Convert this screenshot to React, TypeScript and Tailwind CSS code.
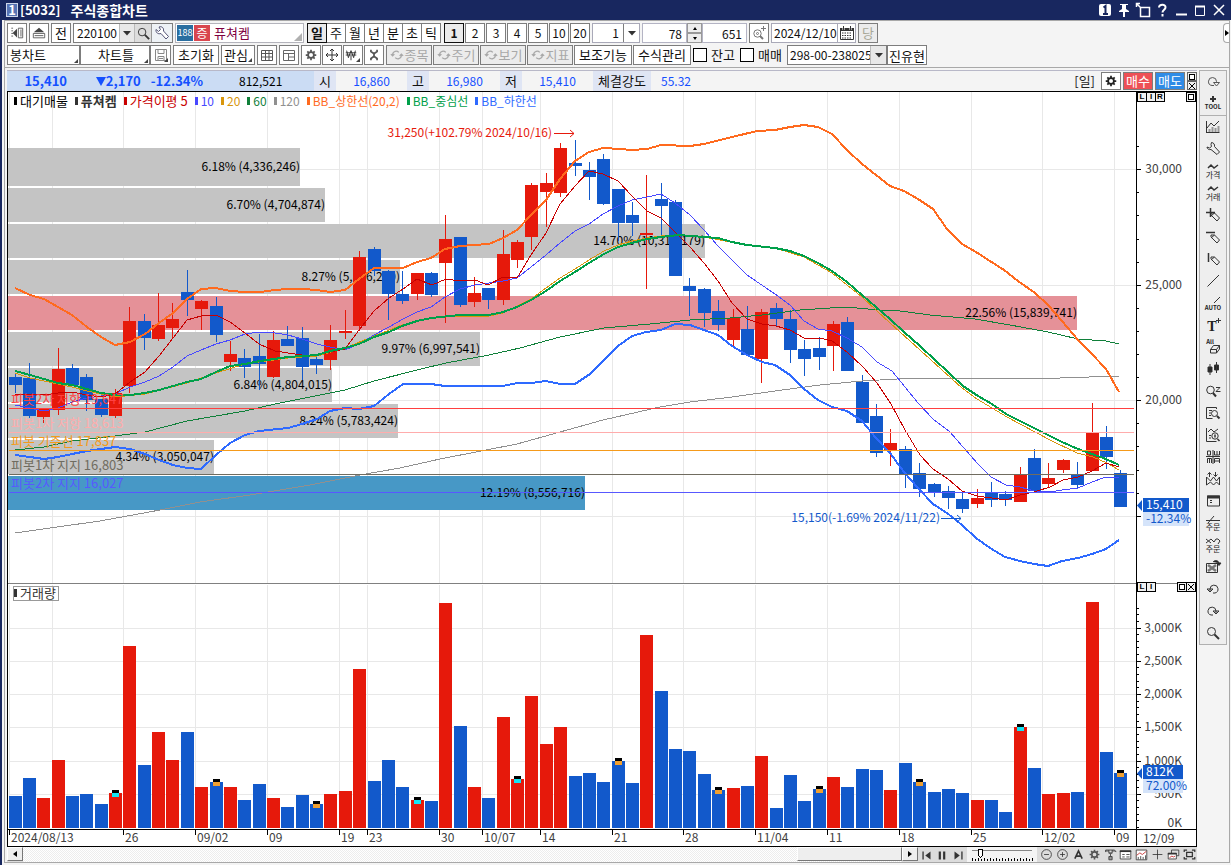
import type { ReactNode } from "react";

const RED = "#e6190b";
const BLUE = "#1259cb";

/* [rising, body top, body bottom, wick top, wick bottom, volume top] */
type Bar = [0 | 1, number, number, number, number, number];
const bars: Bar[] = [
  [0, 377, 385, 374, 393, 796], [0, 378, 416, 363, 418, 778], [1, 408, 417, 408, 423, 798], [1, 369, 410, 348, 415, 760],
  [0, 368, 385, 364, 385, 796], [0, 377, 400, 374, 411, 794], [0, 399, 415, 399, 417, 804], [1, 393, 416, 389, 418, 793],
  [1, 321, 386, 307, 393, 646], [0, 321, 338, 314, 350, 765], [1, 325, 339, 293, 341, 732], [1, 319, 328, 303, 339, 760],
  [0, 292, 300, 270, 316, 732], [1, 301, 309, 300, 330, 787], [0, 306, 335, 297, 342, 782], [1, 354, 362, 341, 371, 787],
  [0, 358, 367, 349, 378, 800], [0, 356, 364, 334, 390, 784], [1, 340, 377, 331, 378, 798], [0, 339, 346, 326, 346, 807],
  [0, 338, 367, 327, 380, 795], [0, 359, 365, 355, 374, 804], [1, 340, 360, 325, 370, 794], [1, 331, 333, 310, 339, 791],
  [1, 257, 326, 251, 331, 669], [0, 249, 271, 247, 276, 781], [0, 271, 294, 270, 320, 760], [0, 294, 301, 271, 304, 787],
  [1, 273, 294, 273, 300, 800], [0, 273, 295, 272, 297, 801], [1, 239, 263, 215, 323, 603], [0, 237, 305, 237, 307, 726],
  [1, 293, 302, 277, 307, 787], [0, 288, 300, 288, 309, 798], [1, 254, 300, 230, 305, 717], [1, 242, 260, 240, 268, 779],
  [1, 185, 237, 183, 250, 696], [1, 183, 192, 173, 227, 744], [1, 148, 193, 143, 197, 727], [0, 163, 166, 140, 176, 776],
  [0, 170, 177, 162, 200, 773], [0, 159, 204, 154, 205, 782], [0, 189, 223, 189, 241, 761], [0, 215, 223, 202, 236, 783],
  [1, 233, 235, 175, 289, 635], [0, 199, 206, 183, 236, 691], [0, 202, 276, 200, 276, 749], [0, 286, 291, 278, 316, 751],
  [0, 289, 313, 288, 327, 774], [0, 311, 325, 300, 331, 790], [1, 318, 340, 309, 348, 788], [0, 329, 355, 306, 355, 786],
  [1, 312, 359, 309, 383, 756], [0, 308, 319, 303, 327, 808], [0, 319, 350, 310, 363, 775], [0, 349, 359, 340, 376, 801],
  [0, 348, 357, 337, 370, 789], [1, 324, 346, 321, 371, 777], [0, 322, 371, 317, 371, 787], [0, 382, 423, 375, 423, 769],
  [0, 416, 453, 404, 457, 770], [1, 443, 450, 429, 466, 790], [0, 449, 475, 446, 488, 763], [0, 473, 489, 463, 497, 782],
  [0, 484, 492, 483, 497, 792], [0, 491, 498, 486, 509, 789], [0, 499, 509, 493, 513, 793], [1, 498, 504, 489, 508, 800],
  [0, 493, 500, 482, 507, 800], [0, 494, 500, 491, 506, 812], [1, 475, 502, 467, 502, 727], [0, 458, 491, 449, 491, 768],
  [1, 478, 484, 463, 487, 794], [1, 460, 470, 459, 473, 793], [0, 475, 485, 462, 488, 792], [1, 433, 471, 403, 471, 602],
  [0, 437, 457, 426, 469, 752], [0, 473, 507, 470, 507, 773],
];
const barX = (i: number) => Math.floor(9 + 14.36 * i);

const upper =
  "15,288 30,295 44,299 58,307 72,315 87,327 101,337 115,345 130,342 145,334 159,323 173,313 187,299 201,289 216,288 230,291 245,292 260,292 275,290 288,289 302,289 317,290 330,292 345,290 359,279 374,268 403,268 417,262 431,258 445,249 460,246 474,245 489,244 503,238 517,230 531,215 546,200 560,179 575,161 589,152 603,148 620,149 632,150 647,149 661,145 690,146 704,144 732,137 757,131 775,130 790,127 804,125 818,127 832,134 847,150 862,164 876,175 890,186 904,191 918,199 933,209 947,229 962,244 976,252 990,261 1004,270 1018,281 1035,293 1048,305 1062,321 1078,340 1090,352 1106,369 1119,392";
const lower =
  "15,455 30,457 44,459 58,457 72,454 87,451 101,449 115,447 130,449 145,454 159,460 173,465 187,468 201,469 216,455 230,443 245,435 259,431 288,428 302,424 317,419 330,411 345,408 359,409 374,406 389,394 403,384 431,384 445,386 503,386 517,383 531,383 546,381 560,384 575,384 590,374 604,360 618,346 632,336 646,332 661,330 675,324 690,325 704,330 718,335 732,346 747,355 762,362 775,365 790,375 804,389 818,400 832,407 847,411 862,421 876,438 890,453 904,472 918,488 933,504 947,513 962,525 976,538 990,548 1005,557 1020,561 1034,564 1048,566 1062,561 1078,558 1092,554 1106,549 1119,540";
const middle =
  "15,371 30,375 44,379 58,383 72,385 87,389 101,393 115,395 130,395 145,393 159,390 173,386 187,382 201,379 216,372 230,366 245,364 260,361 288,357 317,355 330,351 345,348 359,344 374,337 389,332 402,326 417,321 431,318 460,315 489,315 503,312 517,307 531,300 546,291 560,281 575,272 589,263 604,254 618,247 632,243 647,239 661,237 678,235 704,237 718,238 732,242 747,245 775,248 790,251 804,256 818,263 832,271 847,282 862,295 876,307 890,319 904,332 920,346 935,360 948,372 963,386 978,396 992,404 1006,414 1020,421 1034,428 1048,435 1062,442 1078,449 1092,454 1106,459 1119,465";
const ma20 =
  "15,373 30,378 44,381 72,387 87,391 115,397 145,394 187,383 216,373 245,364 288,358 317,356 345,348 374,336 402,325 431,318 460,316 489,316 503,313 517,306 531,299 546,288 560,278 575,269 589,260 604,251 618,245 632,241 647,238 661,236 678,235 704,237 747,245 775,248 804,257 832,273 862,297 890,323 920,350 962,388 977,399 1007,417 1050,440 1077,453 1093,457 1107,463 1119,470";
const ma5 =
  "15,394 44,395 58,393 72,392 87,395 101,397 115,394 130,382 145,372 159,356 173,338 187,320 201,316 216,315 230,322 245,333 259,344 275,351 288,353 302,355 317,355 330,352 345,349 359,330 374,311 389,298 403,289 417,279 432,285 446,279 460,281 475,280 488,285 503,277 517,278 531,255 546,233 560,204 575,186 589,171 603,174 618,181 632,196 647,211 661,218 675,232 690,247 704,263 718,281 732,303 747,319 762,324 776,326 790,330 804,338 820,338 832,341 847,352 863,367 877,383 891,404 905,430 920,455 933,469 948,479 962,491 977,496 1006,500 1020,495 1034,492 1050,487 1063,480 1078,477 1092,471 1106,463 1119,467";
const ma10 =
  "15,405 44,411 58,408 72,402 87,398 115,394 130,387 145,382 159,376 173,367 187,356 201,350 216,344 230,340 245,334 259,332 275,333 288,335 302,339 317,344 330,347 345,350 359,344 374,335 389,327 403,319 417,312 431,307 445,297 460,289 475,285 489,283 503,281 517,278 531,267 546,255 560,243 575,231 589,224 603,214 618,206 632,200 647,197 661,194 675,203 690,215 704,230 718,246 732,260 747,275 775,294 790,305 804,321 818,329 832,331 847,338 862,347 877,362 892,371 905,387 918,403 933,419 950,432 963,447 978,464 991,477 1006,485 1020,487 1034,491 1050,492 1062,490 1078,488 1092,482 1106,477 1119,477";
const ma60 =
  "15,450 44,447 72,441 115,436 145,432 187,421 216,416 245,411 275,404 310,397 345,390 374,381 417,370 446,363 489,355 520,348 560,337 604,328 650,324 690,320 730,318 762,315 800,310 845,307 880,310 900,311 930,315 975,319 1010,325 1048,332 1078,339 1106,341 1119,344";
const ma120 =
  "15,533 50,528 100,521 160,510 200,502 250,495 310,485 360,475 400,468 440,459 517,444 560,432 603,420 660,407 690,402 732,397 775,391 820,385 862,381 915,378 1060,378 1119,376";

const profile: [number, number, number, string, string][] = [
  [148, 38, 300, "#c4c4c4", "6.18% (4,336,246)"],
  [188, 34, 325, "#c4c4c4", "6.70% (4,704,874)"],
  [224, 34, 705, "#c4c4c4", "14.70% (10,317,179)"],
  [260, 34, 400, "#c4c4c4", "8.27% (5,806,200)"],
  [296, 34, 1077, "#e59198", "22.56% (15,839,741)"],
  [332, 34, 480, "#c4c4c4", "9.97% (6,997,541)"],
  [368, 34, 332, "#c4c4c4", "6.84% (4,804,015)"],
  [404, 34, 398, "#c4c4c4", "8.24% (5,783,424)"],
  [440, 34, 214, "#c4c4c4", "4.34% (3,050,047)"],
  [476, 34, 585, "#4798c6", "12.19% (8,556,716)"],
];
const pivots: [number, string, string][] = [
  [408, "#ff4040", "피봇2차 저항 19,647"],
  [432, "#ffacac", "피봇1차 저항 18,613"],
  [450, "#f59a1a", "피봇 기준선 17,837"],
  [474, "#706c60", "피봇1차 지지 16,803"],
  [492, "#5858ff", "피봇2차 지지 16,027"],
];
const priceTicks = [146, 169, 192, 215, 239, 262, 285, 308, 331, 354, 377, 400, 423, 446, 470, 493, 516];
const priceLabels: [number, string][] = [[169, "30,000"], [285, "25,000"], [400, "20,000"]];
const volumeLabels: [number, string][] = [
  [628, "3,000K"], [661, "2,500K"], [694, "2,000K"], [727, "1,500K"], [761, "1,000K"], [794, "500K"],
];
const dates: [number, string][] = [
  [9, "2024/08/13"], [52, ""], [123, "26"], [195, "09/02"], [267, "09"], [339, "19"], [367, "23"], [439, "30"], [482, "10/07"],
  [540, "14"], [612, "21"], [683, "28"], [755, "11/04"], [827, "11"], [899, "18"], [971, "25"], [1042, "12/02"], [1114, "09"],
];
const volumeMarks: [number, string][] = [
  [7, "#14e4f4"], [14, "#f0a030"], [21, "#f0a030"], [28, "#14e4f4"], [35, "#14e4f4"], [42, "#f0a030"],
  [49, "#f0a030"], [56, "#f0a030"], [63, "#f0a030"], [70, "#14e4f4"], [77, "#f0a030"],
];

function Chart() {
  return (
    <svg viewBox="8 92 1188 754" className="block h-auto w-full bg-white text-[12px]" role="img" aria-label="퓨쳐켐 일봉 차트">
      <g shapeRendering="crispEdges">
        <g fill="#e8e8e8">
          {dates.map(([x]) => (
            <g key={x}>
              <rect x={x} y={92} width={1} height={491} />
              <rect x={x} y={585} width={1} height={243} />
            </g>
          ))}
          {[169, 285, 400, 516, 628, 661, 694, 727, 761, 794].map((y) => (
            <rect key={y} x={9} y={y} width={1127} height={1} />
          ))}
        </g>
        {profile.map(([y, h, right, fill]) => (
          <rect key={y} x={8} y={y} width={right - 8} height={h} fill={fill} />
        ))}
      </g>
      <g fill="#000" textAnchor="end">
        {profile.map(([y, h, right, , label]) => (
          <text key={y} x={right} y={y + h / 2 + 4}>{label}</text>
        ))}
      </g>
      <g shapeRendering="crispEdges">
        {bars.map(([up, top, bottom, high, low, vol], i) => (
          <g key={i} fill={up ? RED : BLUE}>
            <rect x={barX(i)} y={top} width={13} height={bottom - top} />
            <rect x={barX(i) + 6} y={high} width={1} height={low - high} />
            <rect x={barX(i)} y={vol} width={13} height={828 - vol} />
          </g>
        ))}
        {volumeMarks.map(([i, fill]) => (
          <g key={i}>
            <rect x={barX(i) + 3} y={bars[i][5] - 3} width={7} height={3} fill="#000" />
            <rect x={barX(i) + 3} y={bars[i][5]} width={7} height={4} fill={fill} />
          </g>
        ))}
      </g>
      <g fill="none" strokeLinejoin="round" shapeRendering="crispEdges">
        <polyline points={ma120} stroke="#909090" />
        <polyline points={ma60} stroke="#10803a" />
        <polyline points={ma20} stroke="#d8960c" />
        <polyline points={ma10} stroke="#4848ff" />
        <polyline points={ma5} stroke="#c80000" />
        <g strokeWidth={2}>
          <polyline points={upper} stroke="#ff6a1e" />
          <polyline points={middle} stroke="#00a04a" />
          <polyline points={lower} stroke="#2e6aff" />
        </g>
      </g>
      {pivots.map(([y, color, label]) => (
        <g key={y} fill={color} className="text-[13px]">
          <rect x={9} y={y} width={1125} height={1} shapeRendering="crispEdges" />
          <text x={11} y={y - 4}>{label}</text>
        </g>
      ))}
      <g fill={RED}>
        <text x={552} y={137} textAnchor="end">31,250(+102.79% 2024/10/16)</text>
        <path d="M554 133.5h20M570 130l4 3.5-4 3.5" fill="none" stroke={RED} />
      </g>
      <g fill={BLUE}>
        <text x={940} y={522} textAnchor="end">15,150(-1.69% 2024/11/22)</text>
        <path d="M941 518.5h20M957 515l4 3.5-4 3.5" fill="none" stroke={BLUE} />
      </g>

      <g shapeRendering="crispEdges">
        <rect x={1137} y={92} width={59} height={754} fill="#fff" />
        <rect x={8} y={583} width={1188} height={1} fill="#808080" />
        <rect x={1136} y={92} width={1} height={754} fill="#000" />
        <rect x={8} y={829} width={1188} height={1} fill="#000" />
        {priceTicks.map((y) => (
          <rect key={y} x={1137} y={y} width={[169, 285, 400, 516].includes(y) ? 4 : 2} height={1} fill="#000" />
        ))}
        {Array.from({ length: 34 }, (_, i) => (
          <rect key={i} x={1137} y={Math.round(827 - i * 6.65)} width={i % 5 === 0 && i > 0 ? 4 : 2} height={1} fill="#000" />
        ))}
        {dates.filter(([, t]) => t).map(([x]) => (
          <rect key={x} x={x} y={830} width={1} height={5} fill="#000" />
        ))}
      </g>
      <g fill="#404040">
        {dates.map(([x, t]) => <text key={x} x={x + 2} y={842}>{t}</text>)}
        {priceLabels.map(([y, t]) => <text key={t} x={1182} y={y + 4} textAnchor="end">{t}</text>)}
        {volumeLabels.map(([y, t]) => <text key={t} x={1182} y={y + 4} textAnchor="end">{t}</text>)}
        <text x={1182} y={827} textAnchor="end">0K</text>
        <text x={1143} y={843}>12/09</text>
      </g>
      <g>
        <path d="M1142 500v11l-5-5.500z" fill={BLUE} />
        <rect x={1143} y={498} width={46} height={14} fill={BLUE} />
        <text x={1146} y={509} fill="#fff">15,410</text>
        <rect x={1143} y={512} width={46} height={14} fill="#d5e4fa" />
        <text x={1146} y={523} fill={BLUE}>-12.34%</text>
        <path d="M1142 768v11l-5-5.500z" fill={BLUE} />
        <rect x={1143} y={765} width={40} height={14} fill={BLUE} />
        <text x={1146} y={776} fill="#fff">812K</text>
        <rect x={1143} y={779} width={40} height={14} fill="#d5e4fa" />
        <text x={1146} y={790} fill={BLUE}>72.00%</text>
      </g>
    </svg>
  );
}

function Ico({ children, label, size = 16 }: { children: ReactNode; label?: string; size?: number }) {
  return (
    <svg viewBox="0 0 16 16" width={size} height={size} fill="none" stroke="#333" className="shrink-0 overflow-visible" aria-label={label} aria-hidden={!label}>
      {children}
    </svg>
  );
}

const gear = (
  <>
    <circle cx="8" cy="8" r="3.300" strokeWidth="2" />
    <path d="M8 2v2.500M8 11.500V14M2 8h2.500M11.500 8H14M3.800 3.800l1.700 1.700M10.500 10.500l1.700 1.700M12.200 3.800l-1.700 1.700M5.500 10.500l-1.700 1.700" strokeWidth="2" />
  </>
);
const pencil = <path d="M6 6h3.500l5 5-2.500 3-6-6zM9.500 6L6 9" />;
const lens = (
  <>
    <circle cx="6.500" cy="6.500" r="4" />
    <path d="M9.500 9.500l4.500 4.500" strokeWidth="2" />
  </>
);
const smallText = (t: string, y = 15, size = 8) => (
  <text x="8" y={y} fontSize={size} textAnchor="middle" fill="#222" stroke="none">{t}</text>
);
const capsText = (t: string, x = 8, y = 15) => (
  <text x={x} y={y} fontSize="6" fontWeight="bold" textAnchor="middle" fill="#222" stroke="none">{t}</text>
);

const sideTop: [string, ReactNode][] = [
  ["다시", <path d="M9 11.500H7a4 4 0 1 1 4.500-4V9M8.500 8.500h6l-3 3.500z" stroke="#555" />],
  ["TOOL", <><path d="M8 0v6M5 3h6" strokeWidth="2" />{capsText("TOOL", 8, 13)}</>],
];
const sideIcons: [string, ReactNode][] = [
  ["차트", (
    <>
      <path d="M4.500 10v3M7.500 8v5M10.500 9v4M13.500 7v6" stroke="#999" strokeWidth="2" />
      <path d="M1.500 2v12M1.500 13.500h13M2 9l4-5 3 3 5-5" />
    </>
  )],
  ["설정", <path d="M6.500 1.500c2 0 3.500 2 3 4l5 5.500-2.500 2.500-6-5c-2 .5-4-.5-4-2.500l2.500 1 2-1.500-.5-2z" />],
  ["가격", <><path d="M3 5l3-3 3 3 4-3" strokeWidth="1.500" />{smallText("가격")}</>],
  ["거래", <><path d="M3 5l3-3 3 3 4-3" strokeWidth="1.500" />{smallText("거래")}</>],
  ["십자선", <><path d="M5.500 1v9M1 5.500h9" strokeWidth="1.500" />{pencil}</>],
  ["수평선", <><path d="M1 3.500h9" strokeWidth="1.500" />{pencil}</>],
  ["수직선", <><path d="M3.500 2v9" strokeWidth="1.500" />{pencil}</>],
  ["추세선", <path d="M2.500 13.500L14 2" />],
  ["자동추세선", <><path d="M9 8l6-6" />{capsText("AUTO")}</>],
  ["문자", (
    <>
      <text x="7" y="14" fontSize="14" fontWeight="bold" textAnchor="middle" fill="#222" stroke="none" fontFamily="Liberation Serif, serif">T</text>
      <path d="M13.500 1v5M11 3.500h5" />
    </>
  )],
  ["전체지우기", <>{capsText("All", 5, 5)}<path d="M5.500 10.500l3-4h6v3.500l-3 4h-6zM5.500 10.500h6l3-4M11.500 10.500v3.500" /></>],
  ["봉", <path d="M5 3v11M11.500 1v11M3 6h4v5H3zM9.500 4h4v5h-4z" fill="#222" />],
  ["검색", <><circle cx="5.500" cy="7" r="3.800" /><path d="M8 10l3 3.500" strokeWidth="2" /><path d="M11 4.500h4l-4 4h4.500" /></>],
  ["종목검색", <><path d="M11.500 4V2.500h-10v11h6M4 5.500h3M4 8h2M4 10.500h2" /><circle cx="9.500" cy="8.500" r="3" /><path d="M12 11l2.500 2.500" strokeWidth="2" /></>],
  ["차트검색", <><path d="M1.500 1v13.500h10M3 5l3-3 3 3 4-3M4 8.500h2M4 11h2" /><circle cx="10" cy="9" r="3.200" /><path d="M10 7.500v3M12.500 12l2 2" strokeWidth="1.500" /></>],
  ["기간", <path d="M2.500 2h3v4h-3zM2.500 14V9.500h4V14M4.500 9.500V14M9.500 2v4h5V2M12 2v4M9.500 14V9.500h5V14M9.500 12h5M1 7.500h14M8 1v14" />],
  ["비교", <path d="M1.500 14V6l4 4 3-4 3 4 3-4v8l-3-3-3 3-3-3zM4.500 6V1.500M2.500 3.500l2-2 2 2M10.500 1v4.500M8.500 3.500l2 2 2-2" />],
  ["창", <><path d="M2.500 3h12v10h-12z" /><path d="M2 4h13" strokeWidth="3" /><path d="M5 7.500h2M5 9.500h2" /></>],
  ["주문선", <><path d="M1 5.500h14M3 8l6-7" />{smallText("주문")}</>],
  ["주문설정", <><path d="M1 6l5-4 3 3 2-3h2l2 2-2 3M1 2l5 4" />{smallText("주문")}</>],
  ["이미지", <><path d="M1.500 4.500h11v9h-11z" /><path d="M3 6l8 6M3 12l8-6" strokeWidth="2.500" stroke="#777" /><path d="M8 3c2-2 5-2 6 1M11.500 4h4.500l-2 2.500z" fill="#222" /></>],
  ["실행취소", <path d="M8 12h2a4 4 0 1 0-5-4v2M2 8l3 3L8 8z" />],
  ["다시실행", <path d="M8 12H6a4 4 0 1 1 5-4v2M14 8l-3 3L8 8z" />],
  ["확대", lens],
];

const refresh = (
  <path d="M3 9V7a4 4 0 0 1 7-2M1 7l2 2 2-2M13 7v2a4 4 0 0 1-7 2M15 9l-2-2-2 2" stroke="#a8a8a8" strokeWidth="1.500" />
);
const Corner = () => (
  <svg viewBox="0 0 5 5" className="pointer-events-none absolute right-0.5 bottom-0.5 size-1" aria-hidden>
    <path d="M5 0v5H0z" fill="#444" />
  </svg>
);
const Down = () => (
  <svg viewBox="0 0 8 5" width="8" height="5" aria-hidden><path d="M0 0h8L4 4.500z" fill="#333" /></svg>
);

const btn = "relative flex h-5 shrink-0 items-center justify-center border border-[#7d7d7d] bg-white leading-4";

function Btn({ className = "w-5", children, label, disabled }: { className?: string; children: ReactNode; label?: string; disabled?: boolean }) {
  return (
    <button type="button" aria-label={label} disabled={disabled} className={`${btn} ${className}`}>
      {children}
    </button>
  );
}

function Toolbar() {
  return (
    <div className="flex flex-col gap-0.5 border-b border-[#a8a8a8] p-0.5 text-[13px] text-[#111]">
      <div className="flex h-5 items-center gap-0.5">
        <Btn label="이전"><Ico size={14}><path d="M1.500 2.500h2M1.500 5.500h2M1.500 8.500h2M1.500 11.500h2M9.500 2.500h5v11h-5zM12.500 4v8" stroke="#555" /><path d="M3 8l5-5v10z" fill="#444" stroke="none" /></Ico></Btn>
        <Btn label="위로"><Ico size={14}><path d="M2 7l6-5 6 5z" fill="#444" stroke="none" /><path d="M1.500 8.500h13v5h-13zM3 11h10" stroke="#555" /></Ico></Btn>
        <Btn>전</Btn>
        <div className="flex h-5 w-[100px] shrink-0 items-stretch border border-[#7d7d7d] bg-white">
          <input aria-label="종목코드" defaultValue="220100" className="w-[45px] min-w-0 pl-[3px] text-[12px] outline-none" />
          <button type="button" aria-label="목록" className="flex w-4 items-center justify-center border-x border-[#bbb] bg-[#e8e8e8]"><Down /></button>
          <button type="button" aria-label="종목검색" className="flex flex-1 items-center justify-center border-r border-[#999] bg-[#ddd]"><Ico size={15}>{lens}</Ico></button>
          <button type="button" aria-label="설정" className="flex w-5 items-center justify-center bg-[#eef2f6]"><Ico><path d="M2 4.500l2.500 2 2-2L5 2c3-1 5 1 4.500 4l5 5.500-2.500 2.500-5-5.500C4 9.500 1.500 7.500 2 4.500z" stroke="#557" fill="#fff" /></Ico></button>
        </div>
        <div className="relative flex h-5 w-[129px] shrink-0 items-center border border-[#b4b4bc] bg-white pl-px">
          <span className="flex size-4 items-center justify-center bg-[#2a6ea0] text-[9px] text-white">188</span>
          <span className="ml-px flex size-4 items-center justify-center bg-[#d9474f] text-[12px] text-white">증</span>
          <span className="pl-1 text-[#800040]">퓨쳐켐</span>
          <svg viewBox="0 0 8 8" className="absolute right-px bottom-px size-2" aria-hidden><path d="M8 0v8H0z" fill="#b0b0b0" /></svg>
        </div>
        <div className="mx-px flex">
          <Btn className="z-10 w-5 border-[#111]! bg-[#ebebeb]! font-bold">일</Btn>
          {["주", "월", "년", "분", "초", "틱"].map((t) => <Btn key={t} className="-ml-px w-5">{t}</Btn>)}
        </div>
        <div className="flex gap-px text-[12px]">
          <Btn className="w-5 border-[#111]! bg-[#ebebeb]! font-bold">1</Btn>
          {["2", "3", "4", "5", "10", "20"].map((t) => <Btn key={t}>{t}</Btn>)}
        </div>
        <div className="flex h-5 w-12 shrink-0 border border-[#a9a9b8] bg-white text-[12px]">
          <input aria-label="주기" defaultValue="1" className="w-[30px] pr-1 text-right outline-none" />
          <button type="button" aria-label="주기 선택" className="flex flex-1 items-center justify-center border-l border-[#7d7d7d]"><Down /></button>
        </div>
        <div className="flex text-[12px]">
          <input aria-label="봉 개수" defaultValue="78" className="h-5 w-[45px] border border-[#b4b4c4] bg-white pr-1 text-right outline-none" />
          <div className="flex w-[15px] flex-col">
            <button type="button" aria-label="증가" className="flex flex-1 items-center justify-center border border-[#999] bg-[#eee]"><svg viewBox="0 0 4 3" width="4" height="3"><path d="M0 3h4L2 0z" /></svg></button>
            <button type="button" aria-label="감소" className="flex flex-1 items-center justify-center border border-[#999] bg-[#eee]"><svg viewBox="0 0 4 3" width="4" height="3"><path d="M0 0h4L2 3z" /></svg></button>
          </div>
          <input aria-label="전체 봉" defaultValue="651" className="h-5 w-[45px] border border-[#b4b4c4] bg-white pr-1 text-right outline-none" />
        </div>
        <Btn label="확대"><Ico><circle cx="6.500" cy="8.500" r="3.700" stroke="#777" /><path d="M9 11l3 3" stroke="#777" strokeWidth="2" /><path d="M12.500 1v5M10 3.500h5" stroke="#777" /><circle cx="6.500" cy="8.500" r="1" stroke="#777" /></Ico></Btn>
        <div className="flex h-5 w-[85px] shrink-0 border border-[#a9a9b8] bg-white text-[12px]">
          <input aria-label="날짜" defaultValue="2024/12/10" className="w-[65px] pl-0.5 outline-none" />
          <button type="button" aria-label="달력" className="flex flex-1 items-center justify-center border-l border-[#a9a9b8]">
            <Ico><path d="M1.500 3.500h13v11h-13z" /><path d="M1 4.500h14" strokeWidth="3" /><path d="M4.500 1v4M11.500 1v4" stroke="#fff" strokeWidth="2" /><path d="M4.500 1v4M11.500 1v4" /><path d="M3 8h10M3 10.500h10M3 13h10" strokeDasharray="1.500 1" /></Ico>
          </button>
        </div>
        <Btn className="w-5 bg-[#ececec]! text-[#a8a898]" disabled>당</Btn>
      </div>

      <div className="flex h-5 items-center gap-0.5">
        <div className="flex">
          <div className="relative w-[73px]">
            <select aria-label="차트 종류" className="h-5 w-full appearance-none border border-[#7d7d7d] bg-white pl-0.5 leading-4"><option>봉차트</option></select>
            <Corner />
          </div>
          <div className="relative w-[70px]">
            <select aria-label="차트틀" className="h-5 w-full appearance-none border border-[#7d7d7d] bg-white pl-[17px] leading-4"><option>차트틀</option></select>
            <Corner />
          </div>
          <Btn className="w-[21px]" label="저장"><Ico><path d="M2.500 2.500h11v11h-11zM5 2.500v4h6v-4M5 13.500v-4h6v4M6 11.500h4" stroke="#888" /></Ico><Corner /></Btn>
        </div>
        <Btn className="w-[46px]">초기화</Btn>
        <Btn className="w-[34px] pr-1">관심<Corner /></Btn>
        <Btn label="격자"><Ico><path d="M2.500 3.500h11v10h-11zM2.500 6.500h11M2.500 10h11M6.500 3.500v10M10 3.500v10" stroke="#555" /></Ico></Btn>
        <Btn label="배치"><Ico><path d="M2.500 3.500h11v10h-11zM2.500 6.500h11M7.500 6.500v7M7.500 10h6" stroke="#666" /></Ico></Btn>
        <div className="flex gap-px">
          <Btn label="환경설정"><Ico size={14}><g stroke="#555">{gear}</g></Ico></Btn>
          <Btn label="이동"><Ico><path d="M8 2v12M2 8h12M6 4l2-2 2 2M6 12l2 2 2-2M4 6L2 8l2 2M12 6l2 2-2 2" /></Ico></Btn>
          <Btn className="w-5 pr-1" label="가격 표시"><Ico size={14}><path d="M3 3l2 8 3-8 3 8 2-8M2 5.500h12M2 8h12M8 9v5" stroke="#222" /></Ico><Corner /></Btn>
          <Btn label="도구"><Ico size={14}><path d="M4.500 2v2l3.500 2.500L11.500 4V2M8 6v5M4.500 14v-2L8 9.500l3.500 2.500v2" stroke="#555" strokeWidth="2" /></Ico></Btn>
        </div>
        <div className="flex gap-px">
          {["종목", "주기", "보기", "지표"].map((t) => (
            <Btn key={t} disabled className="w-[46px] gap-px bg-[#ececec]! text-[#a8a8a8]"><Ico size={14}>{refresh}</Ico>{t}</Btn>
          ))}
          <Btn className="w-[58px]">보조기능</Btn>
          <Btn className="w-[58px]">수식관리</Btn>
        </div>
        {["잔고", "매매"].map((t) => (
          <label key={t} className="flex w-[45px] shrink-0 items-center gap-1 whitespace-nowrap">
            <input type="checkbox" className="size-3.5 shrink-0 appearance-none border border-black bg-white" />{t}
          </label>
        ))}
        <div className="flex">
          <div className="relative w-[100px] text-[12px]">
            <select aria-label="계좌" className="h-5 w-full appearance-none border border-[#7d7d7d] bg-white pl-0.5 leading-4"><option>298-00-238025</option></select>
            <span className="pointer-events-none absolute inset-y-px right-px flex w-4 items-center justify-center border-l border-[#bbb] bg-[#e8e8e8]"><Down /></span>
          </div>
          <input aria-label="계좌주" readOnly value="진유현" className="h-5 w-10 border border-[#7d7d7d] bg-white pl-px outline-none" />
        </div>
      </div>
    </div>
  );
}

const tiny = "flex size-[10px] shrink-0 items-center justify-center border bg-[#f0f0f0] font-['Liberation_Sans',sans-serif] text-[8px] leading-none font-bold text-black";
function Tiny({ children, label, className = "border-black" }: { children?: ReactNode; label: string; className?: string }) {
  return <button type="button" aria-label={label} className={`${tiny} ${className}`}>{children}</button>;
}
const Box = () => <span className="size-1.5 shrink-0 border border-black bg-white" />;
const Cross = () => <svg viewBox="0 0 6 6" width="6" height="6" stroke="#000" aria-hidden><path d="M0 0l6 6M6 0L0 6" /></svg>;

const legend: [string, string][] = [
  ["text-[13px] text-black", "대기매물"],
  ["text-[13px] text-[#333] font-bold", "퓨쳐켐"],
  ["text-[13px] text-[#c80000]", "가격이평 5"],
  ["text-[12px] text-[#4848ff]", "10"],
  ["text-[12px] text-[#d8960c]", "20"],
  ["text-[12px] text-[#10803a]", "60"],
  ["text-[12px] text-[#909090]", "120"],
  ["text-[12px] text-[#ff6a1e]", "BB_상한선(20,2)"],
  ["text-[12px] text-[#00a04a]", "BB_중심선"],
  ["text-[12px] text-[#2e6aff]", "BB_하한선"],
];

function QuoteBar() {
  const label = "flex items-center justify-center bg-[#dfe5f4] text-[#111]";
  const value = "flex items-center justify-center text-[12px] text-[#1450ff]";
  return (
    <div className="flex h-5 items-stretch text-[13px] leading-4">
      <div className="grid w-[307px] shrink-0 grid-cols-[60px_136px_111px] items-center bg-[#cbdcf4]">
        <span className="text-right font-bold text-[#1450ff]">15,410</span>
        <span className="flex items-center justify-end gap-2.5 font-bold text-[#1450ff]">
          <span className="flex items-center"><svg viewBox="0 0 10 9" width="10" height="9" aria-hidden><path d="M0 0h10L5 9z" fill="#1450ff" /></svg>2,170</span>
          <span>-12.34%</span>
        </span>
        <span className="pl-9 text-[12px] text-black">812,521</span>
      </div>
      <span className={`${label} w-[22px]`}>시</span><span className={`${value} w-[71px]`}>16,860</span>
      <span className={`${label} w-[22px]`}>고</span><span className={`${value} w-[71px]`}>16,980</span>
      <span className={`${label} w-[22px]`}>저</span><span className={`${value} w-[71px]`}>15,410</span>
      <span className={`${label} w-[58px]`}>체결강도</span><span className={`${value} w-[50px]`}>55.32</span>
      <div className="ml-auto flex items-center gap-0.5">
        <span className="pr-1 text-[#222]">[일]</span>
        <Btn className="h-[18px]! w-5" label="설정"><Ico size={14}><g stroke="#222">{gear}</g></Ico></Btn>
        <Btn className="h-[18px]! w-[30px] bg-[#ee5055]! text-white">매수</Btn>
        <Btn className="h-[18px]! w-[30px] bg-[#2f8be6]! text-white">매도</Btn>
        <div className="flex flex-col">
          <Tiny label="최대화" className="h-[9px]! border-[#666]"><Box /></Tiny>
          <Tiny label="닫기" className="h-[9px]! border-[#666]"><Cross /></Tiny>
        </div>
      </div>
    </div>
  );
}

function ScrollBar() {
  const raised = "flex h-[14px] items-center justify-center border border-t-white border-r-[#777] border-b-[#777] border-l-white bg-[#eee]";
  return (
    <div className="flex h-[15px] items-start bg-[#dcdcdc]">
      <button type="button" aria-label="왼쪽" className={`${raised} w-4`}><svg viewBox="0 0 4 6" width="4" height="6"><path d="M4 0v6L0 3z" /></svg></button>
      <div className="flex h-full flex-1 justify-end bg-[repeating-conic-gradient(#ffffff_0_25%,#ededed_0_50%)] bg-size-[2px_2px]">
        <div className={`${raised} w-[105px]`} />
      </div>
      <button type="button" aria-label="오른쪽" className={`${raised} w-4`}><svg viewBox="0 0 4 6" width="4" height="6"><path d="M0 0v6l4-3z" /></svg></button>
      <div className="flex h-full w-[49px] items-center justify-around px-px">
        <button type="button" aria-label="처음"><Ico size={14}><path d="M3.500 4v9" strokeWidth="1.500" /><path d="M12 4v9L6 8.500z" fill="#333" stroke="none" /></Ico></button>
        <button type="button" aria-label="일시정지"><Ico size={14}><path d="M5.500 4v9M10.500 4v9" strokeWidth="2.500" /></Ico></button>
        <button type="button" aria-label="끝"><Ico size={14}><path d="M12.500 4v9" strokeWidth="1.500" /><path d="M4 4v9l6-4.500z" fill="#333" stroke="none" /></Ico></button>
      </div>
      <div className="relative h-full w-[70px] bg-[#f4f4f4]">
        <svg viewBox="0 0 70 15" width="70" height="15" aria-hidden shapeRendering="crispEdges">
          <rect x="5" y="3" width="60" height="1" fill="#888" />
          {Array.from({ length: 21 }, (_, i) => (
            <rect key={i} x={5 + i * 3} y={i % 2 ? 12 : 11} width="1" height={i % 2 ? 2 : 3} fill="#000" />
          ))}
          <path d="M11.500 2.500h4v6l-2 2-2-2z" fill="#fff" stroke="#000" />
        </svg>
        <input type="range" aria-label="봉 간격" defaultValue={12} className="absolute inset-0 w-full opacity-0" />
      </div>
      <div className="flex h-full w-[160px] items-center justify-around pl-0.5">
        {(
          [
            ["축소", <><circle cx="8" cy="8" r="6" /><path d="M5 8h6" /></>],
            ["확대", <><circle cx="8" cy="8" r="6" /><path d="M5 8h6M8 5v6" /></>],
            ["자동", <path d="M3.500 13L8 3.500l4.500 9.500M5.500 10h5" strokeWidth="2" />],
            ["설정", <g stroke="#555">{gear}</g>],
            ["도구", <path d="M2 5V2.500h11L15 5M6 2.500v4h4v-4M8 7v3M6 10.500h4v4H6z" fill="#999" />],
            ["표", <><path d="M1.500 3.500h13v10h-13z" fill="#fff" /><path d="M1 4h14" strokeWidth="2" /><path d="M4 8h3M9 8h4M4 11h3M9 11h4" /></>],
            ["차트", <><path d="M1.500 2.500h13v12h-13z" fill="#fff" /><path d="M2 9l4-3 3 2 5-4" stroke="#c02020" /><path d="M4 11v3M7 10v4M10 11v3M13 9v5" /></>],
            ["십자", <path d="M8 2v12M2 8h12" />],
            ["창", <><path d="M5.500 2.500h9v7h-9z" /><path d="M1.500 6.500h10v7h-10z" fill="#fff" /><path d="M1 7h11" strokeWidth="2" /><path d="M3 12l3-2 2 1 2-1" stroke="#c02020" /></>],
            ["전체화면", <path d="M1.500 5V2.500H5M11 2.500h3.500V5M14.500 11v2.500H11M5 13.500H1.500V11M4.500 5.500h7v5h-7z" strokeWidth="1.500" />],
          ] as [string, ReactNode][]
        ).map(([t, icon]) => (
          <button key={t} type="button" aria-label={t}><Ico size={13}>{icon}</Ico></button>
        ))}
      </div>
    </div>
  );
}

export default function App() {
  return (
    <div className="min-h-screen border-l-2 border-[#18275f] bg-[#f4f4f4] font-['Noto_Sans_CJK_KR',sans-serif]">
      <header className="flex h-5 items-center justify-between bg-[#18275f] pr-1 pl-1 text-white">
        <h1 className="flex items-center gap-0.5 text-[14px] leading-5 font-bold">
          <span className="flex h-3.5 w-3 items-center justify-center border border-white/70 bg-[#5673b4] text-[13px] leading-3">1</span>
          <span className="text-[13px]">[5032]</span>
          <span className="pl-2">주식종합차트</span>
        </h1>
        <div className="flex items-center gap-[3px]">
          {(
            [
              ["1", <><rect x="2" y="2" width="12" height="12" rx="2" fill="#fff" stroke="none" /><path d="M6.500 5.500L8.500 4v8M6 12h5" stroke="#18275f" strokeWidth="2" /></>],
              ["고정", <path d="M4 2h8v1h-2v4l3 2v1H9v5H7v-5H3V9l3-2V3H4z" fill="#fff" stroke="none" />],
              ["복원", <path d="M5.500 5.500h9v9h-9zM1.500 5V1.500H5M2 2l4 4" strokeWidth="1.500" />],
              ["도움말", <path d="M5 5.500C5 1.500 12 2 11.500 5.500c0 2-3 2.500-3 5M8.500 12v2.500" strokeWidth="2" />],
              ["최소화", <path d="M3 12.500h11" strokeWidth="2" />],
              ["최대화", <><path d="M3.500 4.500h9v9h-9z" /><path d="M3 4.500h10" strokeWidth="2" /></>],
              ["닫기", <path d="M3 3l10 10M13 3L3 13" strokeWidth="1.500" />],
            ] as [string, ReactNode][]
          ).map(([t, icon]) => (
            <button key={t} type="button" aria-label={t}><svg viewBox="0 0 16 16" width="16" height="16" fill="none" stroke="#fff" aria-hidden>{icon}</svg></button>
          ))}
        </div>
      </header>

      <div className="mr-px ml-0.5 border border-[#a8a8a8]">
        <div className="relative">
          <Toolbar />
          <button type="button" aria-label="펼치기" className="absolute top-0.5 right-0 flex h-5 w-1.5 items-center justify-center rounded-l border border-r-0 border-[#aaa] bg-white">
            <svg viewBox="0 0 4 6" width="4" height="6" aria-hidden><path d="M0 0v6l4-3z" /></svg>
          </button>
        </div>
        <div className="flex items-start gap-0.5 px-0.5 pt-0.5">
          <main className="min-w-0 flex-1 border-t border-[#b8b8c8]">
            <QuoteBar />
            <div className="relative border border-black">
              <Chart />
              <div className="absolute top-px left-1.5 flex gap-[7px] leading-4 whitespace-nowrap">
                {legend.map(([cls, t]) => (
                  <span key={t} className={`flex items-center gap-[3px] ${cls}`}><i className="h-2 w-[3px] bg-current" />{t}</span>
                ))}
              </div>
              <div className="absolute top-0 right-0 flex w-[59px] justify-between">
                <div className="flex -space-x-px">
                  <Tiny label="L">L</Tiny><Tiny label="I">I</Tiny><Tiny label="R">R</Tiny>
                </div>
                <Tiny label="확대"><Box /></Tiny>
              </div>
              <div className="absolute top-[65%] right-0 flex w-[59px] justify-between">
                <div className="flex -space-x-px"><Tiny label="L">L</Tiny><Tiny label="I">I</Tiny></div>
                <div className="flex -space-x-px"><Tiny label="확대"><Box /></Tiny><Tiny label="닫기"><Cross /></Tiny></div>
              </div>
              <div className="absolute top-[66%] left-[5px] flex h-[15px] -translate-y-1 items-center gap-[3px] border border-[#999] bg-white pr-0.5 text-[13px] leading-3 text-[#333]">
                <i className="h-2 w-[3px] bg-current" />거래량
              </div>
            </div>
            <ScrollBar />
          </main>
          <aside className="flex w-7 shrink-0 flex-col border border-[#b0b0b0] bg-[#eee]">
            <div className="flex flex-col items-center border-b border-[#b0b0b0]">
              {sideTop.map(([t, icon]) => (
                <button key={t} type="button" aria-label={t} className="flex h-[22px] w-full items-center justify-center"><Ico>{icon}</Ico></button>
              ))}
            </div>
            <div className="flex flex-col items-center">
              {sideIcons.map(([t, icon]) => (
                <button key={t} type="button" aria-label={t} className="flex h-[22px] w-full items-center justify-center"><Ico>{icon}</Ico></button>
              ))}
            </div>
          </aside>
        </div>
      </div>
    </div>
  );
}
